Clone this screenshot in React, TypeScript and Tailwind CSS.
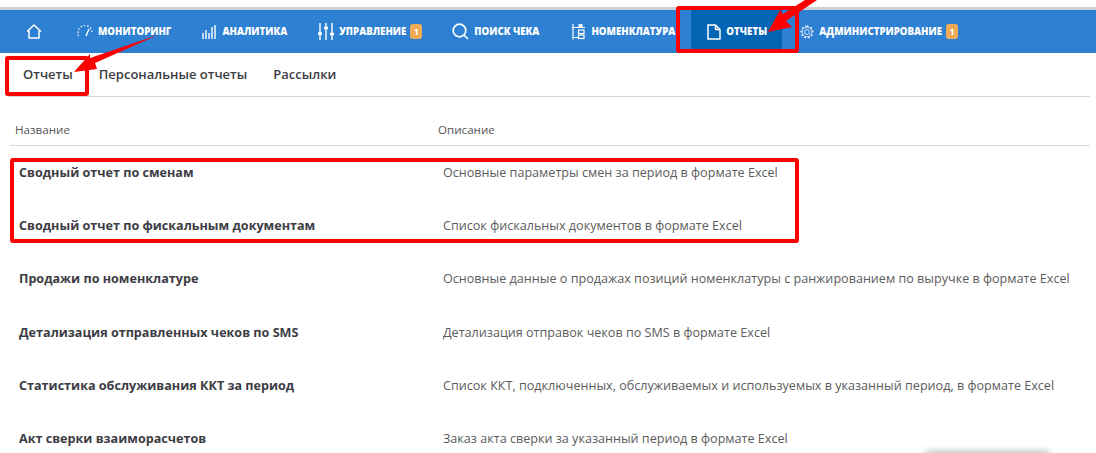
const reports = [
  ['Сводный отчет по сменам', 'Основные параметры смен за период в формате Excel'],
  ['Сводный отчет по фискальным документам', 'Список фискальных документов в формате Excel'],
  ['Продажи по номенклатуре', 'Основные данные о продажах позиций номенклатуры с ранжированием по выручке в формате Excel'],
  ['Детализация отправленных чеков по SMS', 'Детализация отправок чеков по SMS в формате Excel'],
  ['Статистика обслуживания ККТ за период', 'Список ККТ, подключенных, обслуживаемых и используемых в указанный период, в формате Excel'],
  ['Акт сверки взаиморасчетов', 'Заказ акта сверки за указанный период в формате Excel'],
];

function Badge() {
  return (
    <span className="ml-[4px] flex h-[15px] w-[12px] items-center justify-center rounded-[3px] bg-[#eeaa55] text-[9px] font-bold text-white">
      1
    </span>
  );
}

function NavLabel({ children }: { children: string }) {
  return <span className="mt-[1px] ml-[5px] text-[9.7px] font-extrabold whitespace-nowrap text-white">{children}</span>;
}

export default function App() {
  return (
    <div className="relative h-[453px] w-[1096px] overflow-hidden bg-white font-['Open_Sans',sans-serif]">
      <div className="h-[10px] border-b-[3px] border-[#cfcfcf]" />

      {/* Top nav */}
      <nav className="flex h-[43px] items-center bg-[#2d80d2] pl-[26px]">
        <svg width="16" height="15" viewBox="0 0 16 15" fill="none" stroke="white" strokeWidth="1.5">
          <path d="M1 7.5 L8 1 L15 7.5 M3 6.5 V14 H13 V6.5" strokeLinejoin="round" />
        </svg>
        <div className="ml-[35px] flex items-center">
          <svg width="16" height="14" viewBox="0 0 16 14" fill="none" stroke="white" strokeWidth="1.2">
            <path d="M1 9 A7 7 0 0 1 15 8" strokeDasharray="1.6 1.8" />
            <path d="M12 5 L9 12" strokeWidth="1.4" />
            <path d="M1 10.5 L1.5 12" />
          </svg>
          <NavLabel>МОНИТОРИНГ</NavLabel>
        </div>
        <div className="ml-[31px] flex items-center">
          <svg width="15" height="16" viewBox="0 0 15 16" fill="none" stroke="white" strokeWidth="1.4">
            <path d="M1 15 V9 M4 15 V6 M7 15 V9 M10 15 V3 M13 15 V1" />
          </svg>
          <NavLabel>АНАЛИТИКА</NavLabel>
        </div>
        <div className="ml-[31px] flex items-center">
          <svg width="16" height="17" viewBox="0 0 16 17" fill="none" stroke="white" strokeWidth="1.4">
            <path d="M2 0 V17 M8 0 V17 M14 0 V17" />
            <path d="M0 10.5 H4 M6 5 H10 M12 11 H16" strokeWidth="2.4" />
          </svg>
          <NavLabel>УПРАВЛЕНИЕ</NavLabel>
          <Badge />
        </div>
        <div className="ml-[30px] flex items-center">
          <svg width="17" height="17" viewBox="0 0 17 17" fill="none" stroke="white" strokeWidth="1.7">
            <circle cx="7.5" cy="7.5" r="6.3" />
            <path d="M12 12 L15.5 15.5" strokeLinecap="round" />
          </svg>
          <NavLabel>ПОИСК ЧЕКА</NavLabel>
        </div>
        <div className="ml-[32px] flex items-center">
          <svg width="15" height="16" viewBox="0 0 15 16" fill="none" stroke="white" strokeWidth="1.2">
            <path d="M2 0 V15.5 M1 3.5 H14 M2 13.5 H7" />
            <rect x="7.5" y="6" width="5.5" height="3.5" />
            <rect x="7.5" y="11" width="5.5" height="3.5" />
            <rect x="8" y="0.8" width="3" height="2.5" fill="white" />
          </svg>
          <NavLabel>НОМЕНКЛАТУРА</NavLabel>
        </div>
        <div className="ml-[16px] flex h-full w-[91px] items-center bg-[#0465b5] pl-[16px]">
          <svg width="14" height="16" viewBox="0 0 14 16" fill="none" stroke="white" strokeWidth="1.5">
            <path d="M1 1 H8.5 L13 5.5 V15 H1 Z M8.5 1 V5.5 H13" strokeLinejoin="round" />
          </svg>
          <NavLabel>ОТЧЕТЫ</NavLabel>
        </div>
        <div className="ml-[18px] flex items-center">
          <svg width="14" height="16" viewBox="0 0 16 16" fill="none" stroke="white" strokeWidth="0.9">
            <circle cx="8" cy="8" r="2.8" />
            <circle cx="8" cy="8" r="5.6" />
            <path strokeWidth="1.5" strokeDasharray="1.8 2.6" d="M8 1.3 A6.7 6.7 0 1 1 7.9 1.3" />
          </svg>
          <NavLabel>АДМИНИСТРИРОВАНИЕ</NavLabel>
          <Badge />
        </div>
      </nav>

      {/* Tabs */}
      <div className="mr-[6px] ml-[8px] flex h-[44px] items-center gap-[26px] border-b border-[#d4d4d4] pl-[15px] text-[13px] font-semibold text-[#3c3c44]">
        <span>Отчеты</span>
        <span>Персональные отчеты</span>
        <span>Рассылки</span>
      </div>

      {/* Table */}
      <div className="mr-[6px] ml-[10px]">
        <div className="grid h-[49px] grid-cols-[423px_1fr] items-end border-b border-[#d9d9d9] pb-[7px] pl-[5px] text-[11.6px] text-[#555]">
          <span>Название</span>
          <span>Описание</span>
        </div>
        <div className="pt-[0.5px]">
          {reports.map(([name, desc]) => (
            <div key={name} className="grid h-[53.3px] grid-cols-[424px_1fr] items-center pl-[9px] text-[12.6px]">
              <span className="font-bold text-[#3c3c44]">{name}</span>
              <span className="whitespace-nowrap text-[#5c5c5c]">{desc}</span>
            </div>
          ))}
        </div>
      </div>

      {/* Annotations */}
      <div className="absolute top-[56px] left-[5px] h-[40px] w-[84px] rounded-[3px] border-[4px] border-[#fe0000]" />
      <div className="absolute top-[6px] left-[676px] h-[47px] w-[123px] rounded-[3px] border-[4px] border-[#fe0000]" />
      <div className="absolute top-[158px] left-[10px] h-[85px] w-[789px] rounded-[3px] border-[4px] border-[#fe0000]" />
      <svg className="absolute top-0 left-0" width="1096" height="453" viewBox="0 0 1096 453">
        <path d="M158 35 L95 63 L97 69 L74 72 L90 54 L90 58 Z" fill="#fe0000" />
        <path d="M817 0 L786 21 L792 27 L768 32 L780 10 L783 14 L805 0 Z" fill="#fe0000" />
      </svg>
      <div className="absolute top-[451px] left-[925px] h-[6px] w-[125px] rounded-full bg-[#bbb] blur-[3px]" />
    </div>
  );
}
